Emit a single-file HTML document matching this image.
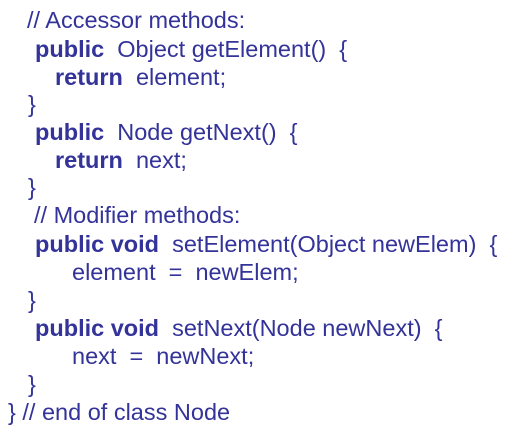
<!DOCTYPE html>
<html><head><style>
html,body{margin:0;padding:0;background:#fff;width:513px;height:443px;overflow:hidden}
.l{position:absolute;white-space:pre;font-family:"Liberation Sans",sans-serif;font-size:23.5px;color:#333399;line-height:28px;}
b{font-weight:bold}
</style></head><body>
<div class="l" style="left:27px;top:6px">// Accessor methods:</div>
<div class="l" style="left:35px;top:35px"><b>public</b>  Object getElement()  {</div>
<div class="l" style="left:55px;top:63px"><b>return</b>  element;</div>
<div class="l" style="left:28px;top:90px">}</div>
<div class="l" style="left:35px;top:118px"><b>public</b>  Node getNext()  {</div>
<div class="l" style="left:55px;top:146px"><b>return</b>  next;</div>
<div class="l" style="left:28px;top:173px">}</div>
<div class="l" style="left:34px;top:201px">// Modifier methods:</div>
<div class="l" style="left:35px;top:230px"><b>public void</b>  setElement(Object newElem)  {</div>
<div class="l" style="left:72px;top:258px">element  =  newElem;</div>
<div class="l" style="left:28px;top:286px">}</div>
<div class="l" style="left:35px;top:314px"><b>public void</b>  setNext(Node newNext)  {</div>
<div class="l" style="left:72px;top:342px">next  =  newNext;</div>
<div class="l" style="left:28px;top:370px">}</div>
<div class="l" style="left:8px;top:398px">} // end of class Node</div>
</body></html>
